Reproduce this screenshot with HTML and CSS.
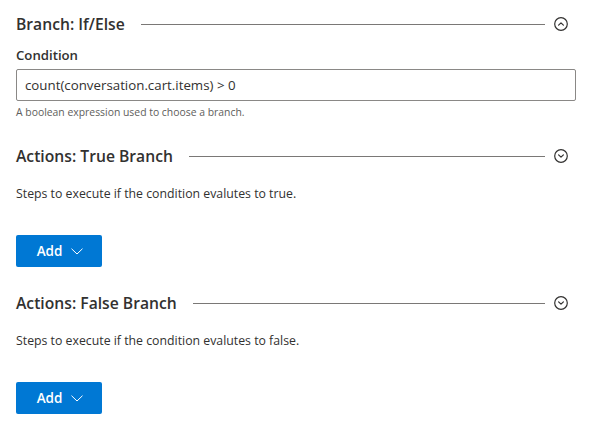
FILE: index.html
```html
<!DOCTYPE html>
<html>
<head>
<meta charset="utf-8">
<link rel="stylesheet" href="styles.css">
</head>
<body>
<div class="page">
  <section class="section">
    <div class="header">
      <h2 class="title">Branch: If/Else</h2>
      <div class="rule"></div>
      <button class="toggle" aria-label="Collapse">
        <svg width="14" height="14" viewBox="0 0 14 14"><circle cx="7" cy="7" r="6.3" fill="none" stroke="#323130" stroke-width="1.2"/><path d="M4.6 8.2 L7 5.8 L9.4 8.2" fill="none" stroke="#323130" stroke-width="1.2" stroke-linecap="round" stroke-linejoin="round"/></svg>
      </button>
    </div>
    <label class="label">Condition</label>
    <input class="input" type="text" value="count(conversation.cart.items) &gt; 0">
    <div class="help">A boolean expression used to choose a branch.</div>
  </section>

  <section class="section actions">
    <div class="header">
      <h2 class="title">Actions: True Branch</h2>
      <div class="rule"></div>
      <button class="toggle" aria-label="Expand">
        <svg width="14" height="14" viewBox="0 0 14 14"><circle cx="7" cy="7" r="6.3" fill="none" stroke="#323130" stroke-width="1.2"/><path d="M4.6 5.8 L7 8.2 L9.4 5.8" fill="none" stroke="#323130" stroke-width="1.2" stroke-linecap="round" stroke-linejoin="round"/></svg>
      </button>
    </div>
    <p class="desc">Steps to execute if the condition evalutes to true.</p>
    <button class="add">Add <svg width="12" height="7" viewBox="0 0 12 7"><path d="M0.5 0.7 L6 6 L11.5 0.7" fill="none" stroke="#fff" stroke-width="1"/></svg></button>
  </section>

  <section class="section actions">
    <div class="header">
      <h2 class="title">Actions: False Branch</h2>
      <div class="rule"></div>
      <button class="toggle" aria-label="Expand">
        <svg width="14" height="14" viewBox="0 0 14 14"><circle cx="7" cy="7" r="6.3" fill="none" stroke="#323130" stroke-width="1.2"/><path d="M4.6 5.8 L7 8.2 L9.4 5.8" fill="none" stroke="#323130" stroke-width="1.2" stroke-linecap="round" stroke-linejoin="round"/></svg>
      </button>
    </div>
    <p class="desc">Steps to execute if the condition evalutes to false.</p>
    <button class="add">Add <svg width="12" height="7" viewBox="0 0 12 7"><path d="M0.5 0.7 L6 6 L11.5 0.7" fill="none" stroke="#fff" stroke-width="1"/></svg></button>
  </section>
</div>
</body>
</html>
```

FILE: styles.css
```css
* { box-sizing: border-box; }
html, body { margin: 0; padding: 0; background: #ffffff; }
body {
  font-family: "Open Sans", "Noto Sans", sans-serif;
  color: #323130;
}
.page {
  padding: 8px 16px 0 16px;
  display: flex;
  flex-direction: column;
}
.section { display: flex; flex-direction: column; align-items: flex-start; }
.actions { margin-top: 20px; }
.header {
  display: flex;
  align-items: center;
  height: 32px;
  width: 100%;
}
.title {
  margin: 0;
  font-size: 15.7px;
  font-weight: 600;
  line-height: 22px;
  white-space: nowrap;
}
.rule {
  flex: 1;
  height: 1px;
  background: #7a7876;
  margin-left: 16px;
}
.toggle {
  width: 32px;
  height: 32px;
  border: 0;
  background: transparent;
  padding: 0;
  display: flex;
  align-items: center;
  justify-content: center;
}
.label {
  margin-top: 5px;
  font-size: 13.2px;
  font-weight: 600;
  line-height: 20px;
}
.input {
  margin-top: 4px;
  width: 560px;
  height: 32px;
  border: 1px solid #8a8886;
  border-radius: 2px;
  padding: 0 8px;
  font-family: inherit;
  font-size: 13.3px;
  color: #323130;
  outline: none;
}
.help {
  margin-top: 3px;
  font-size: 10.4px;
  line-height: 16px;
  color: #605e5c;
}
.desc {
  margin: 12px 0 0 0;
  font-size: 12.3px;
  line-height: 20px;
}
.add {
  margin-top: 31px;
  width: 86px;
  height: 32px;
  border: 0;
  border-radius: 2px;
  background: #0078d4;
  color: #ffffff;
  font-family: inherit;
  font-size: 13.5px;
  font-weight: 600;
  display: flex;
  align-items: center;
  justify-content: center;
  gap: 9px;
  padding: 0 0 0 2px;
}
```
